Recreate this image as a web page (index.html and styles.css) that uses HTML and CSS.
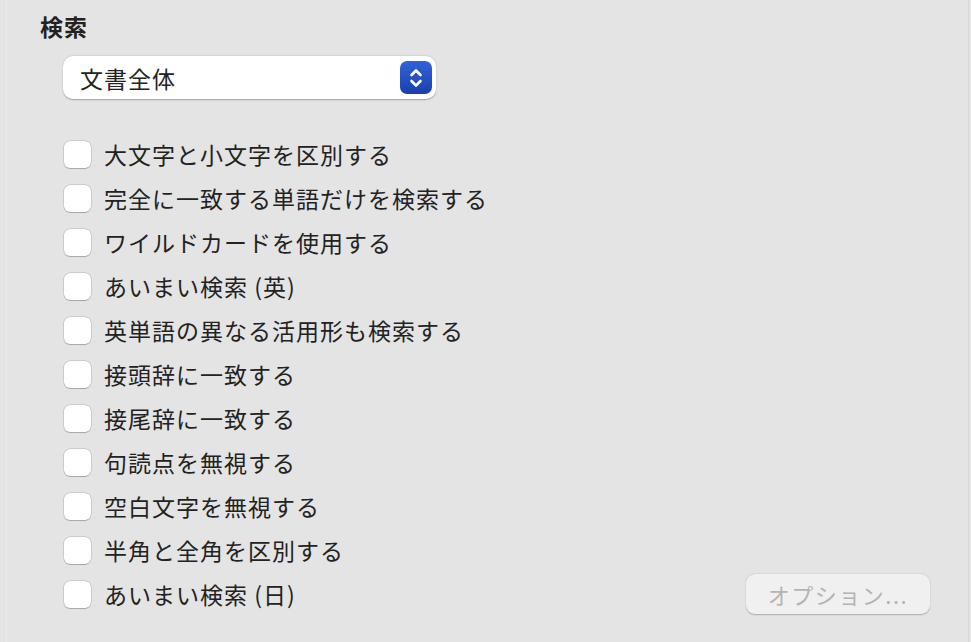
FILE: index.html
```html
<!DOCTYPE html>
<html lang="ja">
<head>
    <meta charset="UTF-8">
    <title>検索</title>
    <link rel="stylesheet" href="styles.css">
</head>
<body>
    <div class="panel">
        <h1 class="titulo">検索</h1>
        <div class="popup">
            <span class="popup-texto">文書全体</span>
            <span class="stepper">
                <svg width="18" height="24" viewBox="0 0 18 24">
                    <path d="M4.5 9 L9 4.5 L13.5 9" fill="none" stroke="#fff" stroke-width="2.6" stroke-linecap="round" stroke-linejoin="round"/>
                    <path d="M4.5 15 L9 19.5 L13.5 15" fill="none" stroke="#fff" stroke-width="2.6" stroke-linecap="round" stroke-linejoin="round"/>
                </svg>
            </span>
        </div>
        <ul class="opcoes">
            <li><span class="caixa"></span>大文字と小文字を区別する</li>
            <li><span class="caixa"></span>完全に一致する単語だけを検索する</li>
            <li><span class="caixa"></span>ワイルドカードを使用する</li>
            <li><span class="caixa"></span>あいまい検索 (英)</li>
            <li><span class="caixa"></span>英単語の異なる活用形も検索する</li>
            <li><span class="caixa"></span>接頭辞に一致する</li>
            <li><span class="caixa"></span>接尾辞に一致する</li>
            <li><span class="caixa"></span>句読点を無視する</li>
            <li><span class="caixa"></span>空白文字を無視する</li>
            <li><span class="caixa"></span>半角と全角を区別する</li>
            <li class="ultima"><span class="caixa"></span>あいまい検索 (日)<button class="botao" disabled>オプション...</button></li>
        </ul>
    </div>
</body>
</html>
```

FILE: styles.css
```css
* {
    margin: 0;
    padding: 0;
    box-sizing: border-box;
}
html, body {
    height: 100%;
}
body {
    background-color: #e4e4e4;
    font-family: "Noto Sans CJK JP", "Noto Sans", sans-serif;
    color: #222;
    overflow: hidden;
}
.panel {
    height: 100%;
    margin: 0 2px 0 6px;
    border-left: 1px solid #ebebeb;
    border-right: 1px solid #d6d6d6;
    padding: 10px 0 0 33px;
}
.titulo {
    font-size: 23px;
    font-weight: bold;
    letter-spacing: 1px;
    line-height: 32px;
    color: #222;
}
.popup {
    display: flex;
    align-items: center;
    justify-content: space-between;
    width: 373px;
    height: 43px;
    margin: 14px 0 0 23px;
    padding: 0 4px 0 17px;
    background-color: #fff;
    border-radius: 10px;
    box-shadow: 0 0.5px 1.5px rgba(0, 0, 0, 0.3);
}
.popup-texto {
    font-size: 23px;
    letter-spacing: 1px;
}
.stepper {
    display: flex;
    align-items: center;
    justify-content: center;
    width: 32px;
    height: 33px;
    border-radius: 7px;
    background: linear-gradient(#3363d6, #1a3fae);
}
.opcoes {
    list-style: none;
    margin: 33px 0 0 24px;
}
.opcoes li {
    display: flex;
    align-items: center;
    height: 44px;
    font-size: 23px;
    letter-spacing: 1px;
}
.caixa {
    width: 27px;
    height: 27px;
    margin-right: 13px;
    background-color: #fff;
    border-radius: 6px;
    box-shadow: 0 0 0 0.5px rgba(0, 0, 0, 0.18), 0 0.5px 1px rgba(0, 0, 0, 0.2);
}
.botao {
    margin-left: auto;
    margin-right: 38px;
    width: 184px;
    height: 40px;
    border: none;
    border-radius: 9px;
    background-color: #f0f0f0;
    box-shadow: 0 0.5px 1.5px rgba(0, 0, 0, 0.25);
    color: #b3b3b3;
    font-family: inherit;
    font-size: 22px;
    letter-spacing: 1.5px;
}
```
